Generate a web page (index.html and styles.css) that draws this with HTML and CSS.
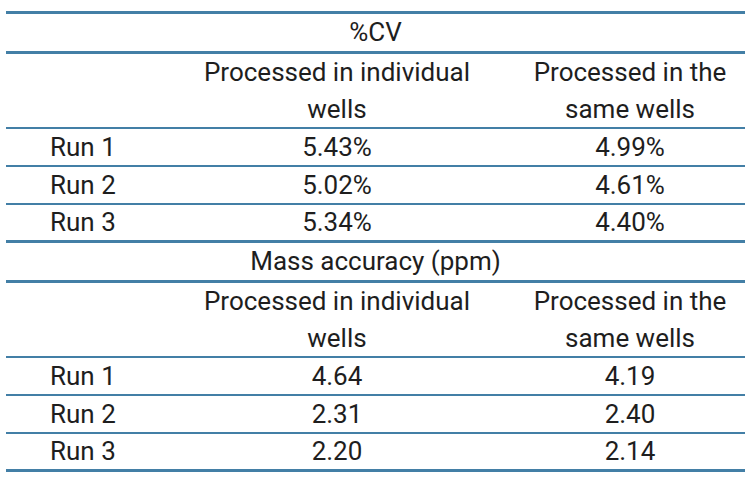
FILE: index.html
```html
<!DOCTYPE html>
<html>
<head>
<meta charset="utf-8">
<link rel="stylesheet" href="styles.css">
</head>
<body>
<div class="wrap">
<table class="cv-table">
  <colgroup>
    <col class="c1"><col class="c2"><col class="c3">
  </colgroup>
  <tbody>
    <tr class="title first"><td colspan="3">%CV</td></tr>
    <tr class="head"><td></td><td>Processed in individual<br>wells</td><td>Processed in the<br>same wells</td></tr>
    <tr class="data"><td class="lbl">Run 1</td><td>5.43%</td><td>4.99%</td></tr>
    <tr class="data"><td class="lbl">Run 2</td><td>5.02%</td><td>4.61%</td></tr>
    <tr class="data last"><td class="lbl">Run 3</td><td>5.34%</td><td>4.40%</td></tr>
    <tr class="title"><td colspan="3">Mass accuracy (ppm)</td></tr>
    <tr class="head"><td></td><td>Processed in individual<br>wells</td><td>Processed in the<br>same wells</td></tr>
    <tr class="data"><td class="lbl">Run 1</td><td>4.64</td><td>4.19</td></tr>
    <tr class="data"><td class="lbl">Run 2</td><td>2.31</td><td>2.40</td></tr>
    <tr class="data last"><td class="lbl">Run 3</td><td>2.20</td><td>2.14</td></tr>
  </tbody>
</table>
</div>
</body>
</html>
```
FILE: styles.css
```css
html, body {
  margin: 0;
  padding: 0;
  background: #ffffff;
}
.wrap {
  padding: 11px 5px 0 6px;
}
.cv-table {
  width: 739px;
  border-collapse: separate;
  border-spacing: 0;
  table-layout: fixed;
  font-family: Roboto, "Liberation Sans", sans-serif;
  font-size: 26px;
  color: #1e1e1e;
}
.c1 { width: 153px; }
.c2 { width: 356px; }
.c3 { width: 230px; }
.cv-table td {
  padding: 0;
  text-align: center;
  white-space: nowrap;
  vertical-align: middle;
}
.title td {
  line-height: 37px;
  border-bottom: 3px solid #437fa6;
}
.title.first td {
  border-top: 3px solid #437fa6;
}
.head td {
  line-height: 36.5px;
  border-bottom: 2px solid #437fa6;
}
.data td {
  line-height: 36px;
  border-bottom: 2px solid #437fa6;
}
.data.last td {
  border-bottom-width: 3px;
  line-height: 35px;
}
.cv-table td.lbl {
  text-align: left;
  padding-left: 44px;
}
```
